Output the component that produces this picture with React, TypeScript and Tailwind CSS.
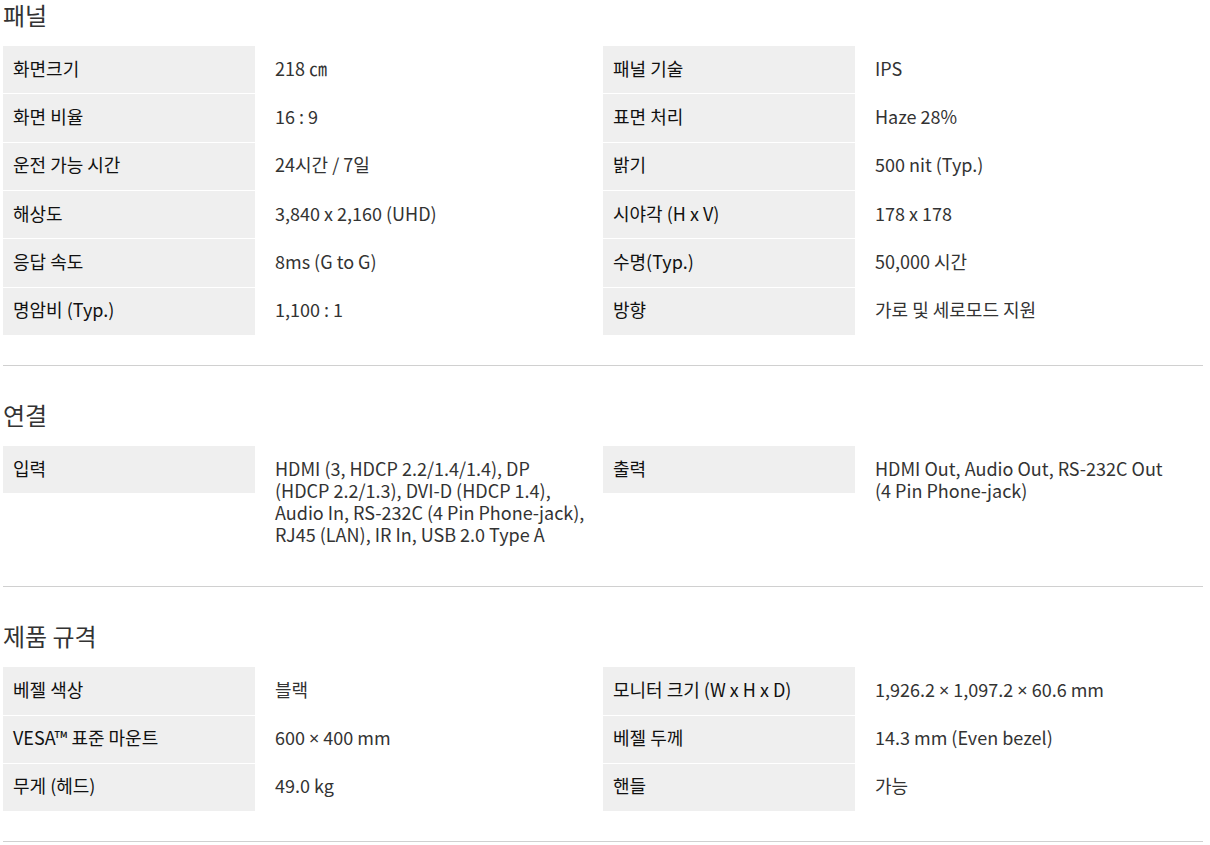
type Spec = { label: string; value: string | string[] };

type Section = { title: string; items: Spec[] };

const sections: Section[] = [
  {
    title: "패널",
    items: [
      { label: "화면크기", value: "218 ㎝" },
      { label: "패널 기술", value: "IPS" },
      { label: "화면 비율", value: "16 : 9" },
      { label: "표면 처리", value: "Haze 28%" },
      { label: "운전 가능 시간", value: "24시간 / 7일" },
      { label: "밝기", value: "500 nit (Typ.)" },
      { label: "해상도", value: "3,840 x 2,160 (UHD)" },
      { label: "시야각 (H x V)", value: "178 x 178" },
      { label: "응답 속도", value: "8ms (G to G)" },
      { label: "수명(Typ.)", value: "50,000 시간" },
      { label: "명암비 (Typ.)", value: "1,100 : 1" },
      { label: "방향", value: "가로 및 세로모드 지원" },
    ],
  },
  {
    title: "연결",
    items: [
      {
        label: "입력",
        value: [
          "HDMI (3, HDCP 2.2/1.4/1.4), DP",
          "(HDCP 2.2/1.3), DVI-D (HDCP 1.4),",
          "Audio In, RS-232C (4 Pin Phone-jack),",
          "RJ45 (LAN), IR In, USB 2.0 Type A",
        ],
      },
      { label: "출력", value: ["HDMI Out, Audio Out, RS-232C Out", "(4 Pin Phone-jack)"] },
    ],
  },
  {
    title: "제품 규격",
    items: [
      { label: "베젤 색상", value: "블랙" },
      { label: "모니터 크기 (W x H x D)", value: "1,926.2 × 1,097.2 × 60.6 mm" },
      { label: "VESA™ 표준 마운트", value: "600 × 400 mm" },
      { label: "베젤 두께", value: "14.3 mm (Even bezel)" },
      { label: "무게 (헤드)", value: "49.0 kg" },
      { label: "핸들", value: "가능" },
    ],
  },
];

// the CJK font draws × full width, so give it the latin one
function withTimes(text: string) {
  const parts = text.split("×");
  return parts.map((p, i) => (
    <span key={i}>
      {p}
      {i < parts.length - 1 && <span className="font-['Noto_Sans',sans-serif]">×</span>}
    </span>
  ));
}

function SpecItem({ spec }: { spec: Spec }) {
  const lines = Array.isArray(spec.value) ? spec.value : [spec.value];
  return (
    <div className="flex items-start">
      <div className="w-[252px] shrink-0 bg-[#efefef] pt-[9.67px] pb-[13.67px] pl-[10px] pr-3 leading-[24px] text-[#111]">
        {spec.label}
      </div>
      <div className="flex-1 pt-[10.67px] pb-[11.67px] pl-5 pr-5 leading-[22px] text-[#333]">
        {lines.map((l) => (
          <span key={l} className="block whitespace-nowrap">
            {withTimes(l)}
          </span>
        ))}
      </div>
    </div>
  );
}

export default function App() {
  return (
    <div className="min-h-screen bg-white font-['Noto_Sans_CJK_KR','Noto_Sans',sans-serif] text-[18px]">
      <div className="w-[1200px] ml-[3px]">
        {sections.map((s, i) => (
          <section key={s.title} className={`border-b border-[#d0d0d0] pb-[30px] ${i === 0 ? "" : "pt-[34px]"}`}>
            <h2 className="mb-[14px] h-8 text-[24px] leading-[29px] text-[#333]">{s.title}</h2>
            <div className="grid grid-cols-2 gap-y-px">
              {s.items.map((it) => (
                <SpecItem key={it.label} spec={it} />
              ))}
            </div>
          </section>
        ))}
      </div>
    </div>
  );
}
